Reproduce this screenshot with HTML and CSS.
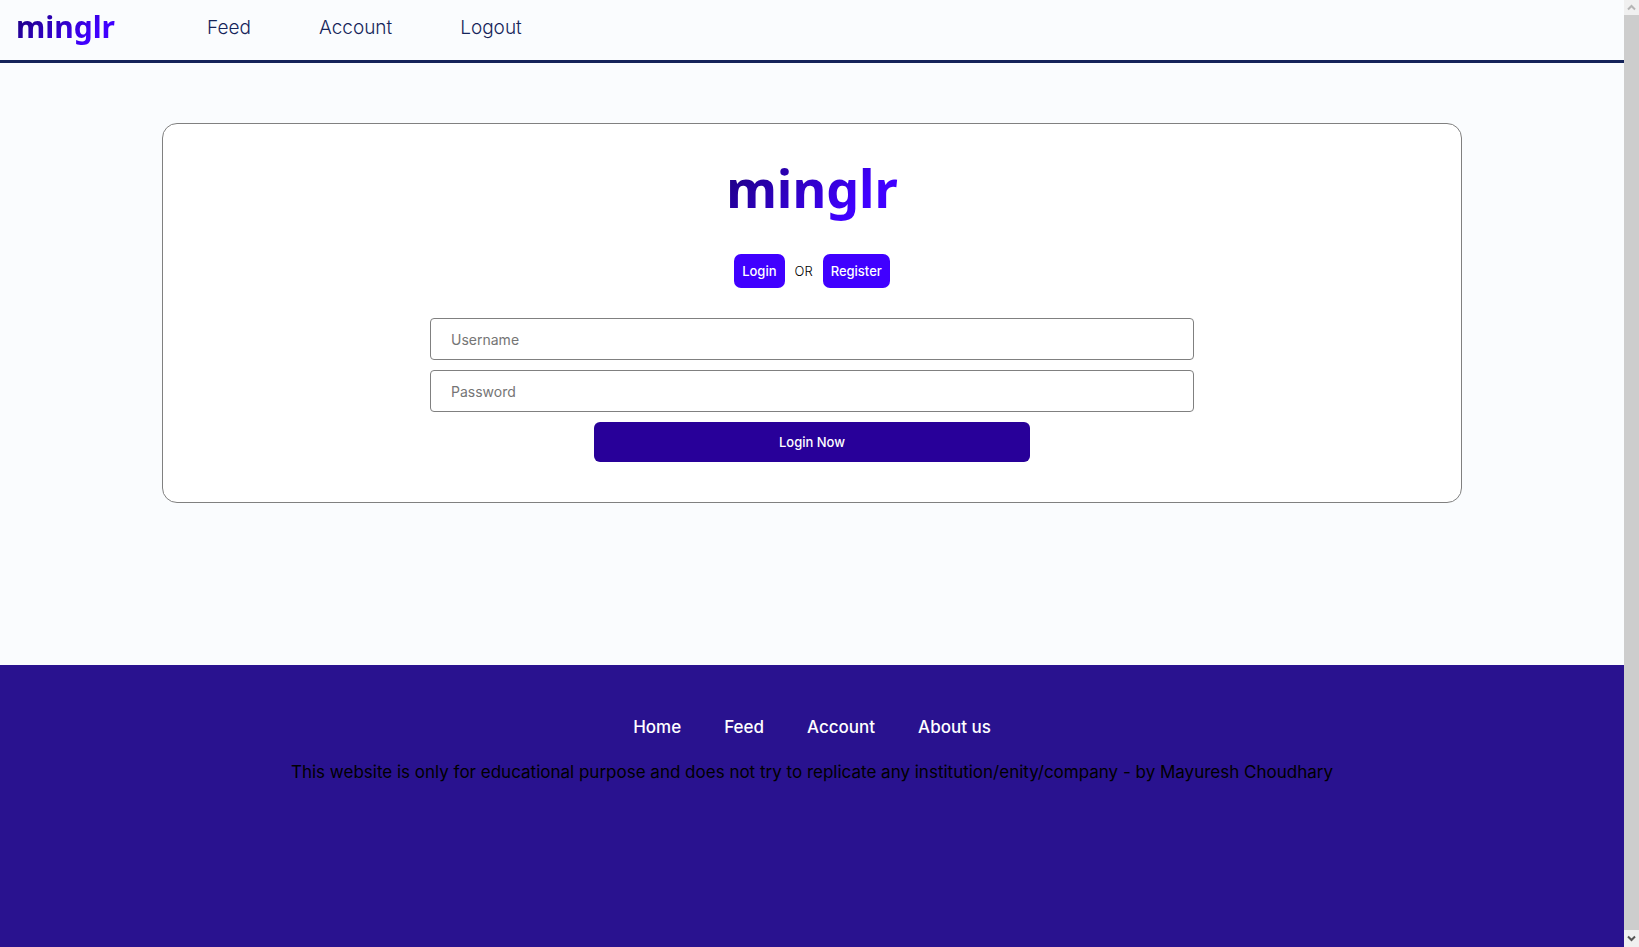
FILE: index.html
```html
<!DOCTYPE html>
<html lang="en">
<head>
<meta charset="utf-8">
<meta name="viewport" content="width=device-width, initial-scale=1">
<title>minglr</title>
<link rel="stylesheet" href="styles.css">
</head>
<body>
<div class="page">
  <header class="header">
    <a class="brand" href="#">minglr</a>
    <nav class="nav">
      <a href="#">Feed</a>
      <a href="#">Account</a>
      <a href="#">Logout</a>
    </nav>
  </header>
  <main class="main">
    <section class="card">
      <h1 class="brand brand-large">minglr</h1>
      <div class="switch">
        <button class="tab" type="button">Login</button>
        <span>OR</span>
        <button class="tab" type="button">Register</button>
      </div>
      <form class="form">
        <input class="field" type="text" placeholder="Username" aria-label="Username">
        <input class="field" type="password" placeholder="Password" aria-label="Password">
        <button class="submit" type="button">Login Now</button>
      </form>
    </section>
  </main>
  <footer class="footer">
    <nav class="footer-nav">
      <a href="#">Home</a>
      <a href="#">Feed</a>
      <a href="#">Account</a>
      <a href="#">About us</a>
    </nav>
    <p class="note">This website is only for educational purpose and does not try to replicate any institution/enity/company - by Mayuresh Choudhary</p>
  </footer>
</div>
<div class="scrollbar" aria-hidden="true">
  <div class="arrow arrow-up"><svg width="9" height="7" viewBox="0 0 9 7"><path d="M1 5.5 4.500 2 8 5.500" /></svg></div>
  <div class="thumb"></div>
  <div class="arrow arrow-down"><svg width="9" height="7" viewBox="0 0 9 7"><path d="M1 1.500 4.500 5 8 1.500" /></svg></div>
</div>
</body>
</html>
```
FILE: styles.css
```css
* {
  box-sizing: border-box;
}

body {
  margin: 0;
  min-height: 100vh;
  display: flex;
  background: #fafcfe;
  color: #000;
  font-family: Inter, "Open Sans", sans-serif;
  font-weight: 300;
  font-size: 17px;
}

a {
  color: inherit;
  text-decoration: none;
}

.page {
  flex: 1;
  min-width: 0;
  display: flex;
  flex-direction: column;
}

.header {
  display: flex;
  align-items: center;
  gap: 92px;
  height: 63px;
  padding: 0 16px 6px;
  border-bottom: 3px solid #15245a;
}

.brand {
  margin: 0;
  font-family: "Noto Sans", sans-serif;
  font-weight: 700;
  font-size: 30px;
  line-height: 44px;
  color: transparent;
  background: linear-gradient(135deg, #1a0073, #4000ff 75%);
  background-clip: text;
  -webkit-background-clip: text;
}

.brand-large {
  font-size: 52px;
  line-height: 68px;
}

.nav {
  display: flex;
  gap: 68px;
  color: #15245a;
  font-size: 19px;
}

.main {
  padding: 60px 10% 162px;
}

.card {
  display: flex;
  flex-direction: column;
  align-items: center;
  padding: 30px 12px 40px;
  border: 1px solid gray;
  border-radius: 15px;
  background: #fff;
}

.switch {
  display: flex;
  align-items: center;
  gap: 10px;
  margin: 32px 0 30px;
  font-size: 13px;
}

.tab {
  height: 34px;
  padding: 0 8px;
  border: 0;
  border-radius: 7px;
  background: #4000ff;
  color: #fff;
  font: 500 13px Inter, sans-serif;
}

.form {
  display: flex;
  flex-direction: column;
  align-items: center;
  gap: 10px;
  width: 60%;
}

.field {
  width: 100%;
  height: 42px;
  padding: 0 20px;
  border: 1px solid gray;
  border-radius: 4px;
  background: #fff;
  font: 400 14px Inter, sans-serif;
}

.field::placeholder {
  color: #757575;
}

.submit {
  width: 57%;
  height: 40px;
  border: 0;
  border-radius: 6px;
  background: #280099;
  color: #fff;
  font: 500 13px Inter, sans-serif;
}

.footer {
  flex: 1;
  display: flex;
  flex-direction: column;
  align-items: center;
  gap: 21px;
  padding: 50px 20px;
  background: #29128f;
  line-height: 24px;
}

.footer-nav {
  display: flex;
  gap: 43px;
  color: #fff;
  font-weight: 500;
}

.note {
  margin: 0;
  font-weight: 400;
  text-align: center;
}

.scrollbar {
  display: flex;
  flex-direction: column;
  width: 15px;
  background: #f0f0f0;
}

.thumb {
  flex: 1;
  background: #cdcdcd;
}

.arrow {
  display: grid;
  place-items: center;
  height: 15px;
}

.arrow-down {
  height: 17px;
}

.arrow svg {
  fill: none;
  stroke: #b5b5b5;
  stroke-width: 2;
}

.arrow-down svg {
  stroke: #555;
}
```
